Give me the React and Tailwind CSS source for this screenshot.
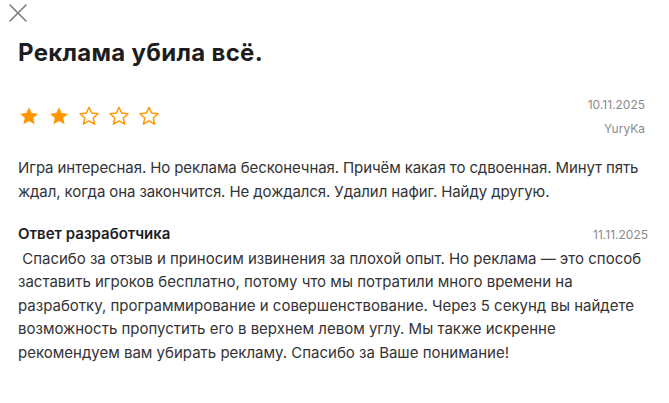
import React from "react";

const Star = ({ filled }) => (
  <svg width="22" height="22" viewBox="0 0 24 24">
    <path
      d="M12 2.5l2.9 6.3 6.9.7-5.2 4.6 1.5 6.8L12 17.4l-6.1 3.5 1.5-6.8-5.2-4.6 6.9-.7z"
      fill={filled ? "#ff9500" : "none"}
      stroke="#ff9500"
      strokeWidth={filled ? 0 : 1.6}
      strokeLinejoin="round"
    />
  </svg>
);

const App = () => {
  const rating = 2;

  return (
    <div className="w-[669px] h-[403px] bg-white text-[#1d1d1f] font-['Inter',sans-serif] overflow-hidden">
      {/* close button */}
      <button className="block ml-[7px] mt-[2px] w-[22px] h-[22px] text-[#7b7b7b]">
        <svg width="22" height="22" viewBox="0 0 22 22">
          <path d="M3 3l16 16M19 3L3 19" stroke="currentColor" strokeWidth="1.6" strokeLinecap="round" />
        </svg>
      </button>

      <div className="pl-[18px] pr-[21px]">
        <h1 className="mt-[14px] text-[24px] font-bold leading-[30px] tracking-[0.3px]">
          Реклама убила всё.
        </h1>

        <div className="mt-[25px] flex justify-between items-start">
          <div className="flex gap-[8px] mt-[12px]">
            {[1, 2, 3, 4, 5].map((n) => (
              <Star key={n} filled={n <= rating} />
            ))}
          </div>
          <div className="text-right text-[12px] text-[#8a8a8e] leading-[24px] mr-[3px]">
            <div>10.11.2025</div>
            <div>YuryKa</div>
          </div>
        </div>

        <p className="mt-[15px] text-[15px] leading-[24px] text-[#333336] tracking-[-0.1px]">
          Игра интересная. Но реклама бесконечная. Причём какая то сдвоенная. Минут пять
          ждал, когда она закончится. Не дождался. Удалил нафиг. Найду другую.
        </p>

        <div className="mt-[19px] flex justify-between items-baseline">
          <span className="text-[15px] font-semibold text-[#1d1d1f]">Ответ разработчика</span>
          <span className="text-[12px] text-[#8a8a8e]">11.11.2025</span>
        </div>

        <p className="mt-[1px] text-[15px] leading-[23.5px] text-[#333336]">
          &nbsp;Спасибо за отзыв и приносим извинения за плохой опыт. Но реклама — это способ
          заставить игроков бесплатно, потому что мы потратили много времени на
          разработку, программирование и совершенствование. Через 5 секунд вы найдете
          возможность пропустить его в верхнем левом углу. Мы также искренне
          рекомендуем вам убирать рекламу. Спасибо за Ваше понимание!
        </p>
      </div>
    </div>
  );
};

export default App;
